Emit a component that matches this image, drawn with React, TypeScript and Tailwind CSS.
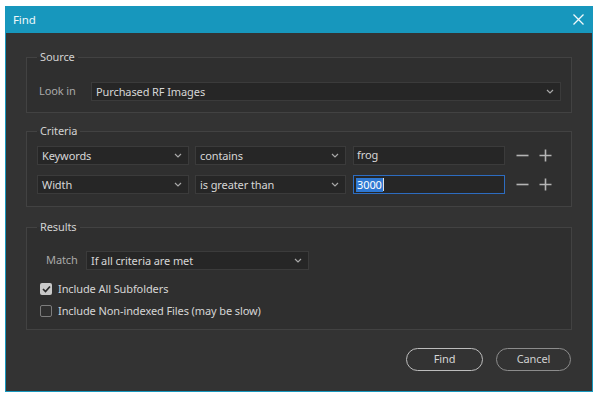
import React from "react";

const font = { fontFamily: '"Noto Sans", "Open Sans", sans-serif' };

function Chevron() {
  return (
    <svg width="8" height="5" viewBox="0 0 8 5" className="shrink-0">
      <path d="M1 1 L4 4 L7 1" fill="none" stroke="#a8a8a8" strokeWidth="1.2" />
    </svg>
  );
}

function Select({ label, className }: { label: string; className: string }) {
  return (
    <div
      className={`flex items-center justify-between h-[19px] bg-[#262626] border border-[#3b3b3b] pl-[4px] pr-[6px] text-[11px] tracking-[-0.1px] text-[#d6d6d6] ${className}`}
    >
      <span className="leading-none">{label}</span>
      <Chevron />
    </div>
  );
}

function MinusPlus() {
  return (
    <div className="flex items-center gap-[10px] ml-[11px]">
      <svg width="13" height="13" viewBox="0 0 13 13">
        <path d="M0.5 6.5 H12.5" stroke="#b4b4b4" strokeWidth="1.6" />
      </svg>
      <svg width="13" height="13" viewBox="0 0 13 13">
        <path d="M0.5 6.5 H12.5 M6.5 0.5 V12.5" stroke="#b4b4b4" strokeWidth="1.6" />
      </svg>
    </div>
  );
}

function Group({
  title,
  className,
  children,
}: {
  title: string;
  className: string;
  children: React.ReactNode;
}) {
  return (
    <fieldset className={`border border-[#424242] bg-[#2f2f2f] mx-[20px] px-[10px] ${className}`}>
      <legend className="px-[3px] text-[11px] tracking-[-0.1px] leading-[16px] text-[#d2d2d2]">{title}</legend>
      {children}
    </fieldset>
  );
}

export default function App() {
  return (
    <div className="w-[600px] h-[397px] bg-white" style={font}>
      <div className="ml-[5px] mt-[6px] w-[588px] h-[386px] border border-[#1797bd] bg-[#333333] flex flex-col">
        <div className="h-[27px] shrink-0 bg-[#1797bd] flex items-center justify-between pl-[8px] pr-[9px] -mt-px -mx-px">
          <span className="text-[11.5px] tracking-[-0.1px] text-[#eef8fb]">Find</span>
          <svg width="11" height="11" viewBox="0 0 11 11">
            <path d="M0.5 0.5 L10.5 10.5 M10.5 0.5 L0.5 10.5" stroke="#f2f9fb" strokeWidth="1.3" />
          </svg>
        </div>

        <Group title="Source" className="mt-[16px] pb-[11px]">
          <div className="flex items-center mt-[17px] pl-[2px]">
            <span className="text-[11px] tracking-[-0.1px] text-[#a9a9a9] w-[52px]">Look in</span>
            <Select label="Purchased RF Images" className="w-[470px]" />
          </div>
        </Group>

        <Group title="Criteria" className="mt-[10px] pb-[12px]">
          <div className="flex items-center mt-[7px]">
            <Select label="Keywords" className="w-[152px]" />
            <Select label="contains" className="w-[151px] ml-[6px]" />
            <div className="w-[152px] h-[19px] ml-[7px] bg-[#262626] border border-[#3b3b3b] pl-[3px] flex items-center text-[11px] tracking-[-0.1px] text-[#d6d6d6]">
              frog
            </div>
            <MinusPlus />
          </div>
          <div className="flex items-center mt-[10px]">
            <Select label="Width" className="w-[152px]" />
            <Select label="is greater than" className="w-[151px] ml-[6px]" />
            <div className="w-[152px] h-[19px] ml-[7px] bg-[#262626] border border-[#2d6cc0] pl-[2px] flex items-center text-[11px] tracking-[-0.1px]">
              <span className="bg-[#2f78d2] text-white leading-[14px] px-px">3000</span>
              <span className="w-px h-[13px] bg-[#e0e0e0]" />
            </div>
            <MinusPlus />
          </div>
        </Group>

        <Group title="Results" className="mt-[12px] pb-[10px]">
          <div className="flex items-center mt-[16px] pl-[9px]">
            <span className="text-[11px] tracking-[-0.1px] text-[#a9a9a9] w-[40px]">Match</span>
            <Select label="If all criteria are met" className="w-[223px]" />
          </div>
          <div className="flex items-center h-[16px] mt-[11px] pl-[3px]">
            <div className="w-[12px] h-[12px] rounded-[2px] bg-[#c9c9c9] flex items-center justify-center">
              <svg width="9" height="8" viewBox="0 0 9 8">
                <path d="M1 4 L3.5 6.5 L8 1.5" fill="none" stroke="#2a2a2a" strokeWidth="1.7" />
              </svg>
            </div>
            <span className="ml-[6px] text-[11px] tracking-[-0.1px] leading-[16px] text-[#d6d6d6]">Include All Subfolders</span>
          </div>
          <div className="flex items-center h-[16px] mt-[6px] pl-[3px]">
            <div className="w-[12px] h-[12px] rounded-[2px] border border-[#7d7d7d]" />
            <span className="ml-[6px] text-[11px] tracking-[-0.1px] leading-[16px] text-[#d6d6d6]">Include Non-indexed Files (may be slow)</span>
          </div>
        </Group>

        <div className="flex justify-end gap-[13px] mt-[18px] pr-[21px]">
          <button className="w-[77px] h-[23px] rounded-full border-[1.5px] border-[#bdbdbd] text-[11px] tracking-[-0.1px] text-[#d6d6d6]">
            Find
          </button>
          <button className="w-[75px] h-[23px] rounded-full border-[1.5px] border-[#8c8c8c] text-[11px] tracking-[-0.1px] text-[#d0d0d0]">
            Cancel
          </button>
        </div>
      </div>
    </div>
  );
}
